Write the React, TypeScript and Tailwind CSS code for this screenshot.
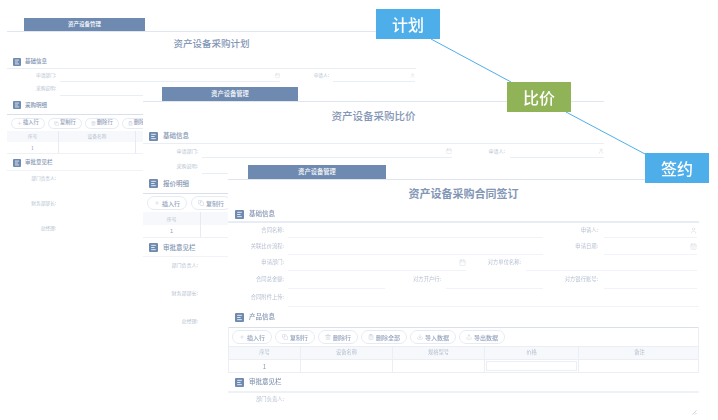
import type { LucideIcon } from 'lucide-react'
import { Calendar, CalendarDays, ClipboardList, Copy, Download, Plus, Trash2, Upload, User } from 'lucide-react'

type Field = {
  label?: string
  labelClass: string
  inputClass: string
  icon?: LucideIcon
}

function SectionHead({ title, rowClass, iconSize, textClass }: {
  title: string
  rowClass: string
  iconSize: number
  textClass: string
}) {
  return (
    <div className={`flex items-center ${rowClass}`}>
      <svg width={iconSize} height={iconSize} viewBox="0 0 10 10" className="shrink-0">
        <rect width="10" height="10" rx="1.2" fill="#6e8ab0" />
        <path d="M2.4 2.6h5.2M2.4 5h3.8M2.4 7.4h5.2" stroke="#fff" strokeWidth="0.9" />
      </svg>
      <span className={`font-medium text-[#8294b1] ${textClass}`}>{title}</span>
    </div>
  )
}

function FormRow({ fields, rowClass, textClass, lineClass, iconSize }: {
  fields: Field[]
  rowClass: string
  textClass: string
  lineClass: string
  iconSize: number
}) {
  return (
    <div className={`flex ${rowClass}`}>
      {fields.map((f, i) => (
        <div key={i} className="flex">
          <div className={`flex shrink-0 items-center justify-end text-[#b5bfd0] ${textClass} ${f.labelClass}`}>{f.label}</div>
          <div className={`flex items-center justify-end border-b ${lineClass} ${f.inputClass}`}>
            {f.icon && <f.icon size={iconSize} strokeWidth={1} className="text-[#b5bfd0]" />}
          </div>
        </div>
      ))}
    </div>
  )
}

const toolbarItems: { label: string; icon: LucideIcon }[] = [
  { label: '插入行', icon: Plus },
  { label: '复制行', icon: Copy },
  { label: '删除行', icon: Trash2 },
  { label: '删除全部', icon: ClipboardList },
  { label: '导入数据', icon: Download },
  { label: '导出数据', icon: Upload },
]

// count: the sheets behind only show the first few buttons before the next sheet covers them
function Toolbar({ rowClass, btnClass, iconSize, count = 6 }: {
  rowClass: string
  btnClass: string
  iconSize: number
  count?: number
}) {
  return (
    <div className={`flex items-center border-t border-[#d9e0ec] ${rowClass}`}>
      {toolbarItems.slice(0, count).map(({ label, icon: Icon }) => (
        <div key={label} className={`flex shrink-0 items-center justify-center rounded-full border border-[#e6ebf3] font-medium text-[#93a2bb] ${btnClass}`}>
          <Icon size={iconSize} strokeWidth={1} />
          {label}
        </div>
      ))}
    </div>
  )
}

function PlanSheet() {
  const line = 'border-[#e9edf4]'
  const label = 'h-full w-[49px]'
  return (
    <div className="absolute left-[7px] top-[18px] h-[225px] w-[409px] bg-white">
      <div className="h-[14px] border-b border-[#dfe6f0] pl-[17px]">
        <div className="flex h-[13px] w-[121px] items-center justify-center bg-[#6e8ab0] text-[5.5px] font-medium text-white">资产设备管理</div>
      </div>
      <div className="flex h-[23px] items-center justify-center text-[9.5px] font-medium text-[#8396b5]">资产设备采购计划</div>
      <SectionHead title="基础信息" rowClass="h-[13px] gap-[4px] pl-[6px]" iconSize={8} textClass="text-[5.5px]" />
      <div className={`h-[1px] border-t ${line}`} />
      <FormRow rowClass="h-[13px]" textClass="text-[4.7px]" lineClass={line} iconSize={5} fields={[
        { label: '申请部门:', labelClass: label, inputClass: 'ml-[4px] w-[220px]', icon: Calendar },
        { label: '申请人:', labelClass: 'h-full w-[49px]', inputClass: 'ml-[4px] w-[82px]', icon: User },
      ]} />
      <FormRow rowClass="h-[14px]" textClass="text-[4.7px]" lineClass={line} iconSize={5} fields={[
        { label: '采购说明:', labelClass: label, inputClass: 'ml-[4px] w-[300px]' },
      ]} />
      <SectionHead title="采购明细" rowClass="h-[18px] gap-[4px] pl-[6px]" iconSize={8} textClass="text-[5.5px]" />
      <Toolbar count={4} rowClass="h-[17px] gap-[3px] pl-[4px]" btnClass="h-[11px] gap-[1px] px-[5px] text-[5.3px]" iconSize={5} />
      <div className="grid h-[11px] grid-cols-[52px_77px_1fr] bg-[#f6f8fb] text-[4.7px] text-[#b5bfd0]">
        <div className="flex items-center justify-center border-r border-[#e6ebf3]">序号</div>
        <div className="flex items-center justify-center border-r border-[#e6ebf3]">设备名称</div>
      </div>
      <div className="grid h-[12px] grid-cols-[52px_77px_1fr] border-b border-[#eef1f6] text-[5px] text-[#8b9ab5]">
        <div className="flex items-center justify-center border-r border-[#e6ebf3]">1</div>
        <div className="border-r border-[#e6ebf3]" />
      </div>
      <SectionHead title="审批意见栏" rowClass="mt-[1px] h-[15px] gap-[4px] pl-[6px]" iconSize={8} textClass="text-[5.5px]" />
      <div className="h-[1px] border-t border-[#f0f3f7]" />
      {['部门负责人:', '财务部部长:', '总经理:'].map((t) => (
        <div key={t} className="flex h-[25px] w-[49px] items-start justify-end pt-[4px] text-[4.7px] text-[#b5bfd0]">{t}</div>
      ))}
    </div>
  )
}

function CompareSheet() {
  const line = 'border-[#e9edf4]'
  const label = 'h-full w-[55px]'
  return (
    <div className="absolute left-[143px] top-[83px] h-[250px] w-[461px] bg-white">
      <div className="h-[19px] border-b border-[#dfe6f0] pl-[19px] pt-[4px]">
        <div className="flex h-[14px] w-[136px] items-center justify-center bg-[#6e8ab0] text-[6.3px] font-medium text-white">资产设备管理</div>
      </div>
      <div className="flex h-[27px] items-center justify-center text-[10.5px] font-medium text-[#8396b5]">资产设备采购比价</div>
      <SectionHead title="基础信息" rowClass="h-[14px] gap-[5px] pl-[6px]" iconSize={9} textClass="text-[6.5px]" />
      <div className={`h-[1px] border-t ${line}`} />
      <FormRow rowClass="h-[14px]" textClass="text-[5px]" lineClass={line} iconSize={6} fields={[
        { label: '申请部门:', labelClass: label, inputClass: 'ml-[4px] w-[250px]', icon: Calendar },
        { label: '申请人:', labelClass: 'h-full w-[53px]', inputClass: 'ml-[5px] w-[94px]', icon: User },
      ]} />
      <FormRow rowClass="h-[16px]" textClass="text-[5px]" lineClass={line} iconSize={6} fields={[
        { label: '采购说明:', labelClass: label, inputClass: 'ml-[4px] w-[300px]' },
      ]} />
      <SectionHead title="报价明细" rowClass="h-[19px] gap-[5px] pl-[6px]" iconSize={9} textClass="text-[6.5px]" />
      <Toolbar count={2} rowClass="h-[19px] gap-[4px] pl-[4px]" btnClass="h-[14px] gap-[2px] px-[6px] text-[6px]" iconSize={6} />
      <div className="grid h-[13px] grid-cols-[58px_1fr] bg-[#f6f8fb] text-[5px] text-[#b5bfd0]">
        <div className="flex items-center justify-center border-r border-[#e6ebf3]">序号</div>
        <div />
      </div>
      <div className="grid h-[13px] grid-cols-[58px_1fr] border-b border-[#eef1f6] text-[5.5px] text-[#8b9ab5]">
        <div className="flex items-center justify-center border-r border-[#e6ebf3]">1</div>
      </div>
      <SectionHead title="审批意见栏" rowClass="mt-[1px] h-[17px] gap-[5px] pl-[6px]" iconSize={9} textClass="text-[6.5px]" />
      <div className="h-[1px] border-t border-[#f0f3f7]" />
      {['部门负责人:', '财务部部长:', '总经理:'].map((t) => (
        <div key={t} className="flex h-[28px] w-[55px] items-start justify-end pt-[4px] text-[5px] text-[#b5bfd0]">{t}</div>
      ))}
    </div>
  )
}

function ContractSheet() {
  const line = 'border-[#f0f3f7]'
  const label = 'h-full w-[56px]'
  const rows: { h: string; fields: Field[] }[] = [
    { h: 'h-[15px]', fields: [
      { label: '合同名称:', labelClass: label, inputClass: 'ml-[4px] w-[255px]' },
      { label: '申请人:', labelClass: 'h-full w-[55px]', inputClass: 'ml-[6px] w-[93px]', icon: User },
    ] },
    { h: 'h-[17px]', fields: [
      { label: '关联比价流程:', labelClass: label, inputClass: 'ml-[4px] w-[255px]' },
      { label: '申请日期:', labelClass: 'h-full w-[55px]', inputClass: 'ml-[6px] w-[93px]', icon: CalendarDays },
    ] },
    { h: 'h-[16px]', fields: [
      { label: '申请部门:', labelClass: label, inputClass: 'ml-[4px] w-[178px]', icon: Calendar },
      { label: '对方单位名称:', labelClass: 'h-full w-[55px]', inputClass: 'ml-[5px] w-[171px]' },
    ] },
    { h: 'h-[18px]', fields: [
      { label: '合同总金额:', labelClass: label, inputClass: 'ml-[4px] w-[97px]' },
      { label: '对方开户行:', labelClass: 'h-full w-[56px]', inputClass: 'ml-[5px] w-[97px]' },
      { label: '对方银行账号:', labelClass: 'h-full w-[55px]', inputClass: 'ml-[6px] w-[93px]' },
    ] },
    { h: 'h-[18px]', fields: [
      { label: '合同附件上传:', labelClass: label, inputClass: 'ml-[4px] w-[411px]' },
    ] },
  ]
  const cols = 'grid-cols-[72px_92px_92px_94px_121px]'
  const heads = ['序号', '设备名称', '规格型号', '价格', '备注']
  return (
    <div className="absolute left-[228px] top-[163px] h-[257px] w-[471px] bg-white">
      <div className="h-[17px] border-b border-[#dfe4ee] pl-[20px] pt-[2px]">
        <div className="flex h-[14px] w-[138px] items-center justify-center bg-[#6e8ab0] text-[6.3px] font-medium text-white">资产设备管理</div>
      </div>
      <div className="flex h-[27px] items-center justify-center text-[11px] font-semibold text-[#8396b5]">资产设备采购合同签订</div>
      <SectionHead title="基础信息" rowClass="h-[14px] gap-[5px] pl-[7px]" iconSize={9} textClass="text-[6.5px]" />
      <div className="h-[2px] bg-[#e8ecf4]" />
      {rows.map((r, i) => (
        <FormRow key={i} rowClass={r.h} textClass="text-[5.3px]" lineClass={line} iconSize={7} fields={r.fields} />
      ))}
      <SectionHead title="产品信息" rowClass="h-[20px] gap-[5px] pl-[7px]" iconSize={9} textClass="text-[6.5px]" />
      <div className="border-x border-[#ebeff5]">
        <Toolbar rowClass="h-[19px] gap-[3px] pl-[3px]" btnClass="h-[14px] gap-[2px] px-[6px] text-[6px]" iconSize={6} />
        <div className={`grid h-[13px] ${cols} border-t border-[#ebeff5] bg-[#f6f8fb] text-[5.3px] text-[#b5bfd0]`}>
          {heads.map((h) => (
            <div key={h} className="flex items-center justify-center border-r border-[#ebeff5] last:border-r-0">{h}</div>
          ))}
        </div>
        <div className={`grid h-[14px] ${cols} border-y border-[#ebeff5] text-[6px] text-[#8b9ab5]`}>
          <div className="flex items-center justify-center border-r border-[#ebeff5]">1</div>
          <div className="border-r border-[#ebeff5]" />
          <div className="border-r border-[#ebeff5]" />
          <div className="border-r border-[#ebeff5] p-[1px]">
            <div className="h-full border border-[#ebeff5]" />
          </div>
          <div />
        </div>
      </div>
      <SectionHead title="审批意见栏" rowClass="h-[18px] gap-[5px] pl-[7px]" iconSize={9} textClass="text-[6.5px]" />
      <div className="h-[2px] bg-[#eef1f6]" />
      <div className="flex h-[14px] w-[56px] items-center justify-end text-[5.3px] text-[#b5bfd0]">部门负责人:</div>
    </div>
  )
}

function Callout({ text, className }: { text: string; className: string }) {
  return (
    <div className={`absolute flex h-[30px] w-[64px] items-center justify-center text-[16px] font-medium text-white ${className}`}>
      <span className="blur-[0.3px]">{text}</span>
    </div>
  )
}

export default function App() {
  return (
    <div className="relative h-[420px] w-[718px] overflow-hidden bg-white font-['Noto_Sans_CJK_SC','Noto_Sans',sans-serif]">
      <div className="blur-[0.5px]">
        <PlanSheet />
        <CompareSheet />
        <ContractSheet />
        <svg width="5" height="5" viewBox="0 0 5 5" className="absolute left-[692px] top-[410px]">
          <path d="M0.5 4.5 4.5 0.5M3 4.5l1.5-1.5" stroke="#b5bfd0" strokeWidth="0.7" />
        </svg>
      </div>
      <svg width="718" height="420" className="pointer-events-none absolute left-0 top-0">
        <path d="M431 39 511 82M566 112 645 154" stroke="#4eaeea" strokeWidth="1" fill="none" />
      </svg>
      <Callout text="计划" className="left-[376px] top-[9px] bg-[#4eaeea]" />
      <Callout text="比价" className="left-[507px] top-[82px] bg-[#8fb356]" />
      <Callout text="签约" className="left-[645px] top-[153px] bg-[#4eaeea]" />
    </div>
  )
}
